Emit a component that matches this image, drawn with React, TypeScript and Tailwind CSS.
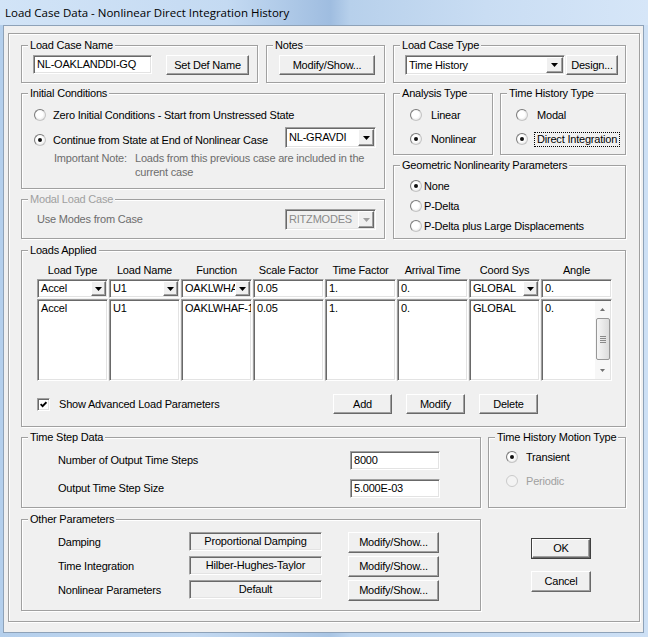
import React from 'react';

const sunken =
  'border border-t-[#a0a0a0] border-l-[#a0a0a0] border-b-white border-r-white shadow-[inset_1px_1px_0_#696969,inset_-1px_-1px_0_#e3e3e3]';
const raised =
  'border border-t-white border-l-white border-b-[#696969] border-r-[#696969] shadow-[inset_-1px_-1px_0_#a0a0a0] bg-[#f0f0f0]';
const etched = 'border border-[#a0a0a0] shadow-[inset_1px_1px_0_#fff,1px_1px_0_#fff]';

type Kids = { children?: React.ReactNode; className?: string };

function Group({ label, disabled, className = '', children }: Kids & { label: string; disabled?: boolean }) {
  return (
    <div className={`relative shrink-0 ${etched} ${className}`}>
      <span
        className={`absolute left-[6px] top-[-7px] bg-[#f0f0f0] px-[2px] leading-[13px] whitespace-nowrap ${
          disabled ? 'text-[#a0a0a0]' : 'text-black'
        }`}
      >
        {label}
      </span>
      {children}
    </div>
  );
}

function Arrow({ up, color = '#000', w = 7, h = 4 }: { up?: boolean; color?: string; w?: number; h?: number }) {
  return (
    <svg width={w} height={h} viewBox={`0 0 ${w} ${h}`}>
      <path d={up ? `M0 ${h}H${w}L${w / 2} 0Z` : `M0 0H${w}L${w / 2} ${h}Z`} fill={color} />
    </svg>
  );
}

function Combo({
  value,
  className = '',
  disabled,
  arrow = 'w-[16px]',
}: {
  value: string;
  className?: string;
  disabled?: boolean;
  arrow?: string;
}) {
  return (
    <div className={`${sunken} flex p-[1px] ${disabled ? 'bg-[#f0f0f0] text-[#8a8a8a]' : 'bg-white'} ${className}`}>
      <span className="flex-1 min-w-0 overflow-hidden whitespace-nowrap pl-[2px] flex items-center">{value}</span>
      <span className={`${raised} ${arrow} shrink-0 flex items-center justify-center`}>
        <Arrow color={disabled ? '#a0a0a0' : '#000'} />
      </span>
    </div>
  );
}

function TextBox({ value, className = '' }: { value: string; className?: string }) {
  return (
    <div className={`${sunken} bg-white flex items-center pl-[3px] overflow-hidden whitespace-nowrap ${className}`}>
      {value}
    </div>
  );
}

function ReadBox({ value }: { value: string }) {
  return (
    <div className={`${sunken} bg-[#f0f0f0] w-[133px] h-[19px] flex items-center justify-center whitespace-nowrap`}>
      {value}
    </div>
  );
}

function Btn({ children, className = '' }: Kids) {
  return (
    <button type="button" className={`${raised} flex items-center justify-center whitespace-nowrap ${className}`}>
      {children}
    </button>
  );
}

function Radio({
  label,
  checked,
  disabled,
  gap = 'gap-[8px]',
  focus,
}: {
  label: string;
  checked?: boolean;
  disabled?: boolean;
  gap?: string;
  focus?: boolean;
}) {
  return (
    <div className={`flex items-center h-[16px] ${gap}`}>
      <span
        className={`w-[12px] h-[12px] shrink-0 rounded-full border flex items-center justify-center ${
          disabled
            ? 'border-[#cacaca] bg-[#f3f3f3]'
            : 'border-t-[#7a7a7a] border-l-[#7a7a7a] border-r-[#c4c4c4] border-b-[#c4c4c4] bg-[radial-gradient(circle_at_45%_45%,#ffffff_40%,#dcdcdc_90%)]'
        }`}
      >
        {checked && <span className="w-[4px] h-[4px] rounded-full bg-[#111]" />}
      </span>
      <span
        className={`leading-[13px] whitespace-nowrap ${disabled ? 'text-[#a0a0a0]' : ''} ${
          focus ? 'border border-dotted border-black px-[2px] -ml-[3px]' : ''
        }`}
      >
        {label}
      </span>
    </div>
  );
}

function ScrollBar() {
  return (
    <div className="w-[15px] shrink-0 my-[1px] mr-[1px] bg-[#f7f7f7] flex flex-col items-center">
      <div className="h-[17px] flex items-center justify-center">
        <Arrow up color="#707070" w={5} h={3} />
      </div>
      <div className="w-[14px] h-[42px] rounded-[2px] border border-[#979797] bg-[linear-gradient(90deg,#f6f6f6,#dcdcdc)] flex flex-col items-center justify-center gap-[1px]">
        {[0, 1, 2, 3].map((i) => (
          <span key={i} className="w-[6px] h-[1px] bg-[#8a8a8a]" />
        ))}
      </div>
      <div className="flex-1" />
      <div className="h-[17px] flex items-center justify-center">
        <Arrow color="#707070" w={5} h={3} />
      </div>
    </div>
  );
}

function ListBox({ value, scroll }: { value: string; scroll?: boolean }) {
  return (
    <div className={`${sunken} bg-white h-[82px] flex overflow-hidden`}>
      <div className="flex-1 min-w-0 pl-[3px] pt-[2px] leading-[13px] whitespace-nowrap overflow-hidden">{value}</div>
      {scroll && <ScrollBar />}
    </div>
  );
}

const headers = ['Load Type', 'Load Name', 'Function', 'Scale Factor', 'Time Factor', 'Arrival Time', 'Coord Sys', 'Angle'];
const listVals = ['Accel', 'U1', 'OAKLWHAF-1', '0.05', '1.', '0.', 'GLOBAL', '0.'];

export default function App() {
  return (
    <div className="relative w-[648px] h-[637px] overflow-hidden font-['Liberation_Sans',Arial,sans-serif] text-[11px] tracking-[-0.2px] text-black bg-[linear-gradient(90deg,#b4cfec_0%,#c3d9f1_30%,#a9c5e4_51%,#bcd4ee_54%,#cde0f5_100%)]">
      {/* Title bar */}
      <div className="h-[25px] flex items-center pl-[5px] font-['Open_Sans',sans-serif] text-[11.5px] tracking-normal bg-[linear-gradient(90deg,#d2e4f7_0%,#c4daf2_35%,#9fbde0_51%,#b7d0eb_54%,#c9ddf3_75%,#d6e6f8_100%)]">
        Load Case Data - Nonlinear Direct Integration History
      </div>

      {/* Client */}
      <div className="ml-[3px] w-[641px] h-[608px] border border-[#8ea2b8] bg-[#f0f0f0] pl-[4px] pt-[7px]">
        <div className={`w-[632px] h-[589px] ${etched} pl-[12px] pt-[11px]`}>
          {/* Top section */}
          <div className="flex gap-[8px]">
            <div className="w-[364px] flex flex-col gap-[10px]">
              <div className="flex gap-[8px]">
                <Group label="Load Case Name" className="w-[237px] h-[38px] pl-[11px] pt-[9px] flex items-start">
                  <TextBox value="NL-OAKLANDDI-GQ" className="w-[119px] h-[19px]" />
                  <Btn className="ml-[14px] w-[83px] h-[20px]">Set Def Name</Btn>
                </Group>
                <Group label="Notes" className="w-[119px] h-[38px] pl-[12px] pt-[9px]">
                  <Btn className="w-[96px] h-[20px]">Modify/Show...</Btn>
                </Group>
              </div>

              <Group label="Initial Conditions" className="h-[96px] pl-[12px] pr-[8px] pt-[13px] flex flex-col">
                <Radio label="Zero Initial Conditions - Start from Unstressed State" gap="gap-[7px]" />
                <div className="mt-[4px] h-[21px] flex items-end">
                  <Radio label="Continue from State at End of Nonlinear Case" checked gap="gap-[7px]" />
                  <Combo value="NL-GRAVDI" className="ml-auto self-start w-[91px] h-[21px]" />
                </div>
                <div className="mt-[3px] ml-[20px] flex leading-[14px] text-[#6d6d6d]">
                  <span className="w-[81px] shrink-0">Important Note:</span>
                  <span>
                    Loads from this previous case are included in the
                    <br />
                    current case
                  </span>
                </div>
              </Group>

              <Group label="Modal Load Case" disabled className="h-[40px] pl-[15px] pr-[8px] pt-[9px]">
                <div className="h-[21px] flex items-center">
                  <span className="text-[#6d6d6d]">Use Modes from Case</span>
                  <Combo value="RITZMODES" disabled className="ml-auto w-[91px] h-[21px]" />
                </div>
              </Group>
            </div>

            <div className="w-[233px] flex flex-col gap-[10px]">
              <Group label="Load Case Type" className="h-[38px] pl-[11px] pt-[9px] flex items-start gap-[1px]">
                <Combo value="Time History" className="w-[160px] h-[20px]" arrow="w-[17px]" />
                <Btn className="w-[52px] h-[20px]">Design...</Btn>
              </Group>
              <div className="flex gap-[7px]">
                <Group label="Analysis Type" className="w-[100px] h-[62px] pl-[16px] pt-[13px] flex flex-col gap-[8px]">
                  <Radio label="Linear" gap="gap-[9px]" />
                  <Radio label="Nonlinear" checked gap="gap-[9px]" />
                </Group>
                <Group label="Time History Type" className="w-[126px] h-[62px] pl-[15px] pt-[13px] flex flex-col gap-[8px]">
                  <Radio label="Modal" gap="gap-[9px]" />
                  <Radio label="Direct Integration" checked focus gap="gap-[9px]" />
                </Group>
              </div>
              <Group label="Geometric Nonlinearity Parameters" className="h-[74px] pl-[16px] pt-[12px] flex flex-col gap-[4px]">
                <Radio label="None" checked gap="gap-[2px]" />
                <Radio label="P-Delta" gap="gap-[2px]" />
                <Radio label="P-Delta plus Large Displacements" gap="gap-[2px]" />
              </Group>
            </div>
          </div>

          {/* Loads Applied */}
          <Group label="Loads Applied" className="mt-[11px] w-[605px] h-[177px] pl-[15px] pt-[13px]">
            <div className="grid grid-cols-[repeat(8,71px)] gap-x-[1px] h-[13px] leading-[13px] text-center">
              {headers.map((h) => (
                <span key={h} className="whitespace-nowrap">
                  {h}
                </span>
              ))}
            </div>
            <div className="mt-[2px] grid grid-cols-[repeat(8,71px)] gap-x-[1px] h-[19px]">
              <Combo value="Accel" className="h-[19px]" arrow="w-[15px]" />
              <Combo value="U1" className="h-[19px]" arrow="w-[15px]" />
              <Combo value="OAKLWHAF-1" className="h-[19px]" arrow="w-[15px]" />
              <TextBox value="0.05" className="h-[19px]" />
              <TextBox value="1." className="h-[19px]" />
              <TextBox value="0." className="h-[19px]" />
              <Combo value="GLOBAL" className="h-[19px]" arrow="w-[15px]" />
              <TextBox value="0." className="h-[19px]" />
            </div>
            <div className="mt-[1px] grid grid-cols-[repeat(8,71px)] gap-x-[1px]">
              {listVals.map((v, i) => (
                <ListBox key={i} value={v} scroll={i === 7} />
              ))}
            </div>
            <div className="mt-[13px] h-[20px] flex items-center">
              <div className="w-[296px] flex items-center gap-[9px]">
                <span className={`${sunken} bg-white w-[13px] h-[13px] flex items-center justify-center`}>
                  <svg width="7" height="7" viewBox="0 0 7 7">
                    <path d="M0.6 3.2L2.6 5.2L6.4 1.2" stroke="#000" strokeWidth="1.8" fill="none" />
                  </svg>
                </span>
                <span>Show Advanced Load Parameters</span>
              </div>
              <div className="flex gap-[14px]">
                <Btn className="w-[59px] h-[20px]">Add</Btn>
                <Btn className="w-[59px] h-[20px]">Modify</Btn>
                <Btn className="w-[59px] h-[20px]">Delete</Btn>
              </div>
            </div>
          </Group>

          {/* Bottom section */}
          <div className="mt-[10px] flex gap-[7px]">
            <div className="w-[460px] flex flex-col gap-[11px]">
              <Group label="Time Step Data" className="h-[71px] pl-[36px] pt-[13px] flex flex-col gap-[9px]">
                <div className="h-[19px] flex items-center">
                  <span className="w-[292px]">Number of Output Time Steps</span>
                  <TextBox value="8000" className="w-[90px] h-[19px]" />
                </div>
                <div className="h-[19px] flex items-center">
                  <span className="w-[292px]">Output Time Step Size</span>
                  <TextBox value="5.000E-03" className="w-[90px] h-[19px]" />
                </div>
              </Group>
              <Group label="Other Parameters" className="h-[92px] pl-[36px] pt-[12px] flex flex-col gap-[3px]">
                {[
                  ['Damping', 'Proportional Damping'],
                  ['Time Integration', 'Hilber-Hughes-Taylor'],
                  ['Nonlinear Parameters', 'Default'],
                ].map(([l, v]) => (
                  <div key={l} className="h-[21px] flex items-start">
                    <span className="w-[131px] mt-[4px] leading-[13px]">{l}</span>
                    <ReadBox value={v} />
                    <Btn className="ml-[26px] w-[91px] h-[21px]">Modify/Show...</Btn>
                  </div>
                ))}
              </Group>
            </div>

            <div className="w-[138px] flex flex-col">
              <Group label="Time History Motion Type" className="h-[71px] pl-[17px] pt-[11px] flex flex-col gap-[8px]">
                <Radio label="Transient" checked gap="gap-[8px]" />
                <Radio label="Periodic" disabled gap="gap-[8px]" />
              </Group>
              <div className="mt-[30px] ml-[43px] w-[60px] h-[21px] border border-[#404040]">
                <Btn className="w-full h-full">OK</Btn>
              </div>
              <Btn className="mt-[12px] ml-[43px] w-[60px] h-[21px]">Cancel</Btn>
            </div>
          </div>
        </div>
      </div>
    </div>
  );
}
